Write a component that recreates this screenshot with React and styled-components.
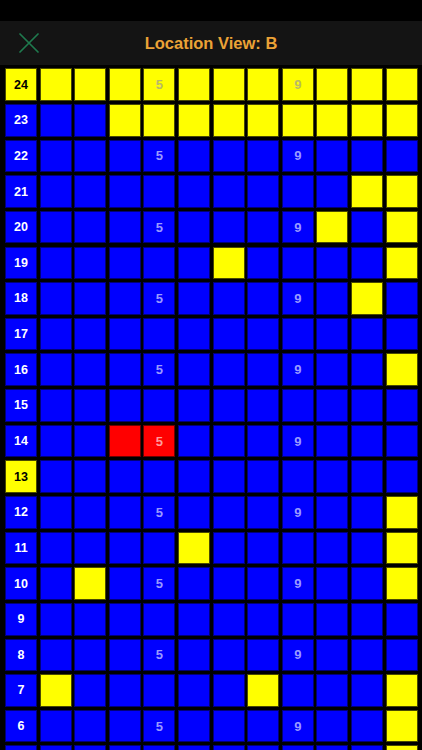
import React from 'react';
import { styled, createGlobalStyle } from 'styled-components';

const COLS = 12;

// yellow / red cells per row, keyed by row number
const yellow = {
  24: [0, 1, 2, 3, 4, 5, 6, 7, 8, 9, 10, 11],
  23: [3, 4, 5, 6, 7, 8, 9, 10, 11],
  21: [10, 11],
  20: [9, 11],
  19: [6, 11],
  18: [10],
  16: [11],
  13: [0],
  12: [11],
  11: [5, 11],
  10: [2, 11],
  7: [1, 7, 11],
  6: [11],
  5: [11],
};
const red = {
  14: [3, 4],
};

const rows = [];
for (let r = 24; r >= 5; r--) rows.push(r);

function cellKind(row, col) {
  if ((red[row] || []).includes(col)) return 'red';
  if ((yellow[row] || []).includes(col)) return 'yellow';
  return 'blue';
}

function cellLabel(row, col) {
  if (col === 0) return String(row);
  if (row % 2 === 0 && col === 4) return '5';
  if (row % 2 === 0 && col === 8) return '9';
  return '';
}

function App() {
  return (
    <>
      <GlobalStyle />
      <Screen>
        <StatusBar />
        <Header>
          <CloseButton aria-label="close">
            <svg width="20" height="20" viewBox="0 0 20 20">
              <path
                d="M1 1 L19 19 M19 1 L1 19"
                stroke="#1f7a4e"
                strokeWidth="1.7"
                strokeLinecap="round"
                fill="none"
              />
            </svg>
          </CloseButton>
          <Title>Location View: B</Title>
        </Header>
        <Board>
          {rows.map((row) =>
            Array.from({ length: COLS }, (_, col) => {
              const kind = cellKind(row, col);
              return (
                <Cell key={row + '-' + col} $kind={kind}>
                  <Label $kind={kind} $head={col === 0}>
                    {cellLabel(row, col)}
                  </Label>
                </Cell>
              );
            })
          )}
        </Board>
      </Screen>
    </>
  );
}

export default App;

//
//
// STYLE

const GlobalStyle = createGlobalStyle`
  html, body {
    margin: 0;
    padding: 0;
    background: #000;
    overflow: hidden;
  }
  * { box-sizing: border-box; }
`;

const fills = {
  blue: '#0000ff',
  yellow: '#ffff00',
  red: '#ff0000',
};

const edges = {
  blue: '#00007a',
  yellow: '#4a4a00',
  red: '#6a0000',
};

const inks = {
  blue: '#9a9aff',
  yellow: '#b9b967',
  red: '#ff9c9c',
};

const Screen = styled.div`
  width: 422px;
  height: 750px;
  overflow: hidden;
  background: #000;
  display: flex;
  flex-direction: column;
  font-family: 'Liberation Sans', Arial, sans-serif;
`;

const StatusBar = styled.div`
  height: 21px;
  flex: none;
  background: #000;
`;

const Header = styled.div`
  height: 44px;
  flex: none;
  background: #141414;
  display: flex;
  align-items: center;
  justify-content: center;
  position: relative;
`;

const CloseButton = styled.div`
  position: absolute;
  left: 19px;
  top: 12px;
  width: 20px;
  height: 20px;
  display: flex;
`;

const Title = styled.div`
  color: #eba236;
  font-size: 16.5px;
  font-weight: 700;
`;

const Board = styled.div`
  display: grid;
  grid-template-columns: repeat(12, 32px);
  grid-auto-rows: 32.6px;
  column-gap: 2.6px;
  row-gap: 3.05px;
  padding: 3.3px 0 0 5px;
`;

const Cell = styled.div`
  background: ${(p) => fills[p.$kind]};
  box-shadow: inset 0 0 0 1px ${(p) => edges[p.$kind]};
  display: flex;
  align-items: center;
  justify-content: center;
`;

const Label = styled.span`
  font-size: ${(p) => (p.$head ? '12.5px' : '13px')};
  font-weight: ${(p) => (p.$head ? 700 : 600)};
  color: ${(p) =>
    p.$head ? (p.$kind === 'yellow' ? '#000' : '#fff') : inks[p.$kind]};
`;
